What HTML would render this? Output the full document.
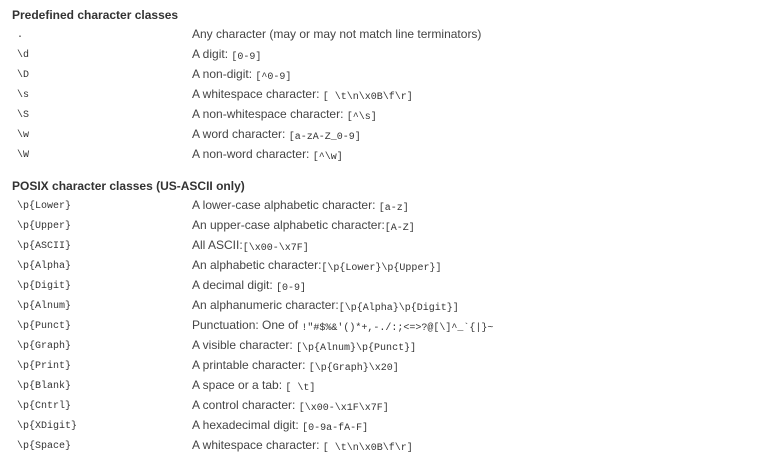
<!DOCTYPE html>
<html><head><meta charset="utf-8"><style>
body{margin:0;background:#fff;width:774px;height:462px;overflow:hidden;position:relative;font-family:"Liberation Sans",Arial,sans-serif;font-size:12px;color:#333}
.h{position:absolute;left:12px;font-weight:bold;font-size:12px;color:#333}
.r{position:absolute;left:0;height:20px;line-height:20px;white-space:pre}
.a{position:absolute;left:17px;top:2px;font-family:"Liberation Mono",monospace;font-size:10px;color:#333}
.b{position:absolute;left:192px;color:#444}
code{font-family:"Liberation Mono",monospace;font-size:10px;color:#333;position:relative;top:1px}
</style></head><body>
<div class="h" style="top:8px">Predefined character classes</div>
<div class="r" style="top:24px"><span class="a">.</span><span class="b">Any character (may or may not match line terminators)</span></div>
<div class="r" style="top:44px"><span class="a">\d</span><span class="b">A digit: <code>[0-9]</code></span></div>
<div class="r" style="top:64px"><span class="a">\D</span><span class="b">A non-digit: <code>[^0-9]</code></span></div>
<div class="r" style="top:84px"><span class="a">\s</span><span class="b">A whitespace character: <code>[ \t\n\x0B\f\r]</code></span></div>
<div class="r" style="top:104px"><span class="a">\S</span><span class="b">A non-whitespace character: <code>[^\s]</code></span></div>
<div class="r" style="top:124px"><span class="a">\w</span><span class="b">A word character: <code>[a-zA-Z_0-9]</code></span></div>
<div class="r" style="top:144px"><span class="a">\W</span><span class="b">A non-word character: <code>[^\w]</code></span></div>
<div class="h" style="top:179px">POSIX character classes (US-ASCII only)</div>
<div class="r" style="top:195px"><span class="a">\p{Lower}</span><span class="b">A lower-case alphabetic character: <code>[a-z]</code></span></div>
<div class="r" style="top:215px"><span class="a">\p{Upper}</span><span class="b">An upper-case alphabetic character:<code>[A-Z]</code></span></div>
<div class="r" style="top:235px"><span class="a">\p{ASCII}</span><span class="b">All ASCII:<code>[\x00-\x7F]</code></span></div>
<div class="r" style="top:255px"><span class="a">\p{Alpha}</span><span class="b">An alphabetic character:<code>[\p{Lower}\p{Upper}]</code></span></div>
<div class="r" style="top:275px"><span class="a">\p{Digit}</span><span class="b">A decimal digit: <code>[0-9]</code></span></div>
<div class="r" style="top:295px"><span class="a">\p{Alnum}</span><span class="b">An alphanumeric character:<code>[\p{Alpha}\p{Digit}]</code></span></div>
<div class="r" style="top:315px"><span class="a">\p{Punct}</span><span class="b">Punctuation: One of <code>!"#$%&amp;'()*+,-./:;&lt;=&gt;?@[\]^_`{|}~</code></span></div>
<div class="r" style="top:335px"><span class="a">\p{Graph}</span><span class="b">A visible character: <code>[\p{Alnum}\p{Punct}]</code></span></div>
<div class="r" style="top:355px"><span class="a">\p{Print}</span><span class="b">A printable character: <code>[\p{Graph}\x20]</code></span></div>
<div class="r" style="top:375px"><span class="a">\p{Blank}</span><span class="b">A space or a tab: <code>[ \t]</code></span></div>
<div class="r" style="top:395px"><span class="a">\p{Cntrl}</span><span class="b">A control character: <code>[\x00-\x1F\x7F]</code></span></div>
<div class="r" style="top:415px"><span class="a">\p{XDigit}</span><span class="b">A hexadecimal digit: <code>[0-9a-fA-F]</code></span></div>
<div class="r" style="top:435px"><span class="a">\p{Space}</span><span class="b">A whitespace character: <code>[ \t\n\x0B\f\r]</code></span></div>
</body></html>
